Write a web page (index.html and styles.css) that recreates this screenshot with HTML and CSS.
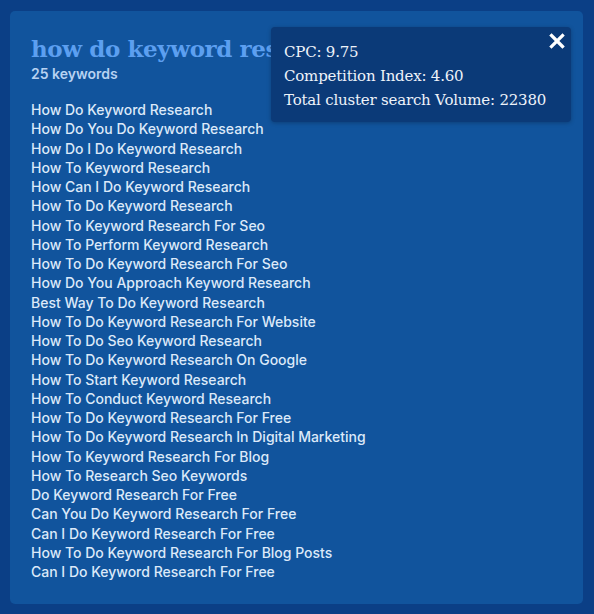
FILE: index.html
```html
<!DOCTYPE html>
<html>

<head>
    <link rel="stylesheet" href="styles.css">
</head>

<body>
    <div class="cluster_card">
        <h2 class="cluster_title">how do keyword research</h2>
        <div class="cluster_count">25 keywords</div>

        <ul class="keyword_list">
            <li>How Do Keyword Research</li>
            <li>How Do You Do Keyword Research</li>
            <li>How Do I Do Keyword Research</li>
            <li>How To Keyword Research</li>
            <li>How Can I Do Keyword Research</li>
            <li>How To Do Keyword Research</li>
            <li>How To Keyword Research For Seo</li>
            <li>How To Perform Keyword Research</li>
            <li>How To Do Keyword Research For Seo</li>
            <li>How Do You Approach Keyword Research</li>
            <li>Best Way To Do Keyword Research</li>
            <li>How To Do Keyword Research For Website</li>
            <li>How To Do Seo Keyword Research</li>
            <li>How To Do Keyword Research On Google</li>
            <li>How To Start Keyword Research</li>
            <li>How To Conduct Keyword Research</li>
            <li>How To Do Keyword Research For Free</li>
            <li>How To Do Keyword Research In Digital Marketing</li>
            <li>How To Keyword Research For Blog</li>
            <li>How To Research Seo Keywords</li>
            <li>Do Keyword Research For Free</li>
            <li>Can You Do Keyword Research For Free</li>
            <li>Can I Do Keyword Research For Free</li>
            <li>How To Do Keyword Research For Blog Posts</li>
            <li>Can I Do Keyword Research For Free</li>
        </ul>

        <div class="cluster_tooltip">
            <button class="close_button" title="Close">
                <svg width="16" height="16" viewBox="0 0 16 16">
                    <path d="M2.5 2.5 L13.5 13.5 M13.5 2.5 L2.5 13.5" stroke="white" stroke-width="3.2" stroke-linecap="square"/>
                </svg>
            </button>
            <p>CPC: 9.75</p>
            <p>Competition Index: 4.60</p>
            <p>Total cluster search Volume: 22380</p>
        </div>
    </div>
</body>

</html>
```

FILE: styles.css
```css
html {
    background: #0b3f86;
}

body {
    margin: 0;
    padding: 11px 11px 10px 10px;
    font-family: Inter, "Liberation Sans", sans-serif;
}

.cluster_card {
    position: relative;
    background: #11549d;
    border-radius: 5px;
    height: 593px;
    box-sizing: border-box;
    padding: 22px 21px;
    overflow: hidden;
}

/* the tooltip covers the end of the title, so clip it at the tooltip edge */
.cluster_title {
    margin: 0;
    width: 240px;
    overflow: hidden;
    font-family: "DejaVu Serif", serif;
    font-weight: bold;
    font-size: 23px;
    line-height: 32px;
    color: #5c9ff0;
    white-space: nowrap;
    letter-spacing: -0.4px;
}

.cluster_count {
    font-size: 14px;
    font-weight: 600;
    color: #b7d2f2;
    line-height: 18px;
}

.keyword_list {
    list-style: none;
    margin: 17px 0 0 0;
    padding: 0;
}

.keyword_list li {
    font-size: 14px;
    font-weight: 500;
    line-height: 19.25px;
    color: #dce9f9;
}

.cluster_tooltip {
    position: absolute;
    top: 16px;
    left: 261px;
    width: 300px;
    box-sizing: border-box;
    padding: 13px 12px 10px 13px;
    background: #0b3a78;
    border-radius: 4px;
    box-shadow: 0 1px 4px rgba(0, 0, 0, 0.25);
    font-family: "DejaVu Serif", serif;
    color: #eef3fa;
}

.cluster_tooltip p {
    margin: 0;
    font-size: 15px;
    line-height: 24px;
    letter-spacing: -0.2px;
}

.close_button {
    position: absolute;
    top: 6px;
    right: 6px;
    border: none;
    background: none;
    padding: 0;
    width: 16px;
    height: 16px;
    cursor: pointer;
}
```
